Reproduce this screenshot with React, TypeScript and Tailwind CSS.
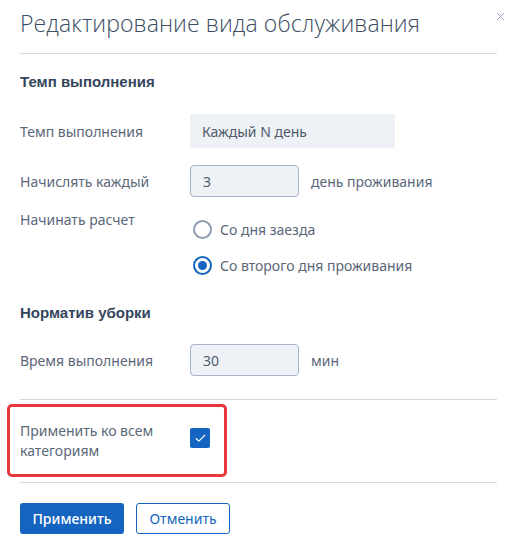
import { Check, X } from "lucide-react";

const body = "font-['Noto_Sans','Open_Sans',sans-serif]";

function Radio({ checked, label }: { checked?: boolean; label: string }) {
  return (
    <label className="flex items-center h-[19px]">
      <span
        className={
          "flex items-center justify-center w-[19px] h-[19px] rounded-full border-2 bg-white " +
          (checked ? "border-[#1565c0]" : "border-[#8d9cb2]")
        }
      >
        {checked && <span className="block w-[9px] h-[9px] rounded-full bg-[#1565c0]" />}
      </span>
      <span className="ml-[8px] text-[14px] text-[#5b6779]">{label}</span>
    </label>
  );
}

function Field({ value }: { value: string }) {
  return (
    <div className="w-[109px] h-[32px] rounded-[4px] border border-[#a6b4c8] bg-[#eef1f5] flex items-center px-[12px] text-[14px] text-[#4f5c6e]">
      {value}
    </div>
  );
}

export default function App() {
  return (
    <div className={"w-[516px] h-[549px] bg-white relative " + body}>
      <button className="absolute right-[9px] top-[10px] text-[#8a9bb5]">
        <X size={13} strokeWidth={1.6} />
      </button>

      <div className="pl-[20px] pr-[19px]">
        <div className="pt-[7px] pb-[14px] border-b border-[#d3d9e4]">
          <h1 className="font-['Open_Sans',sans-serif] text-[23px] leading-[32px] text-[#3c4d63] font-light tracking-[0.1px]">
            Редактирование вида обслуживания
          </h1>
        </div>

        <h2 className="mt-[19px] font-['Liberation_Sans',Arial,sans-serif] font-bold text-[15px] leading-[18px] text-[#34465c]">
          Темп выполнения
        </h2>

        <div className="mt-[23px] flex items-center">
          <div className="w-[170px] text-[14px] text-[#5b6779]">Темп выполнения</div>
          <div className="w-[205px] h-[34px] bg-[#eef1f5] flex items-center px-[12px] text-[14px] text-[#4f5c6e]">
            Каждый N день
          </div>
        </div>

        <div className="mt-[17px] flex items-center">
          <div className="w-[170px] text-[14px] text-[#5b6779]">Начислять каждый</div>
          <Field value="3" />
          <span className="ml-[12px] text-[14px] text-[#5b6779]">день проживания</span>
        </div>

        <div className="mt-[12px] flex">
          <div className="w-[170px] pt-[1px] text-[14px] leading-[20px] text-[#5b6779]">Начинать расчет</div>
          <div className="pl-[3px] pt-[11px] flex flex-col gap-[17px]">
            <Radio label="Со дня заезда" />
            <Radio checked label="Со второго дня проживания" />
          </div>
        </div>

        <h2 className="mt-[29px] font-['Liberation_Sans',Arial,sans-serif] font-bold text-[15px] leading-[18px] text-[#34465c]">
          Норматив уборки
        </h2>

        <div className="mt-[22px] flex items-center">
          <div className="w-[170px] text-[14px] text-[#5b6779]">Время выполнения</div>
          <Field value="30" />
          <span className="ml-[12px] text-[14px] text-[#5b6779]">мин</span>
        </div>

        <div className="mt-[23px] border-t border-[#d3d9e4]" />

        <div className="mt-[4px] -ml-[13px] w-[220px] h-[73px] border-[3px] border-[#e8373b] rounded-[5px] flex items-center pl-[10px]">
          <div className="w-[170px] text-[14px] leading-[20px] text-[#5b6779]">
            Применить ко всем
            <br />
            категориям
          </div>
          <span className="-mt-[5px] flex items-center justify-center w-[20px] h-[20px] rounded-[2px] bg-[#1565c0] text-white">
            <Check size={13} strokeWidth={2} />
          </span>
        </div>

        <div className="mt-[5px] border-t border-[#d3d9e4]" />

        <div className="mt-[20px] flex gap-[12px]">
          <button className="h-[31px] w-[104px] rounded-[3px] bg-[#1565c0] text-white text-[14px] font-medium">
            Применить
          </button>
          <button className="h-[31px] w-[94px] rounded-[3px] border border-[#1565c0] text-[#1565c0] text-[14px]">
            Отменить
          </button>
        </div>
      </div>
    </div>
  );
}
